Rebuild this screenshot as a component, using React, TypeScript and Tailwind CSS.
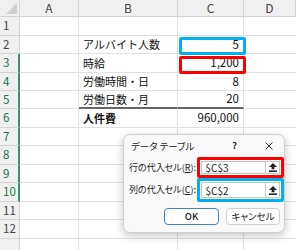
import React from 'react';

const cols = ['A', 'B', 'C', 'D'];
const rowHeights = [19, 18, 19, 18, 18, 19, 18, 19, 18, 19, 18, 19, 19];

const cells: Record<number, { b?: string; c?: string; bold?: boolean }> = {
  2: { b: 'アルバイト人数', c: '5' },
  3: { b: '時給', c: '1,200' },
  4: { b: '労働時間・日', c: '8' },
  5: { b: '労働日数・月', c: '20' },
  6: { b: '人件費', c: '960,000', bold: true },
};

function CollapseIcon() {
  return (
    <svg width="8" height="9" viewBox="0 0 8 9">
      <path d="M4 0 L8 4 L5.4 4 L5.4 6.3 L2.6 6.3 L2.6 4 L0 4 Z" fill="#222" />
      <rect x="0" y="7.4" width="8" height="1.6" fill="#222" />
    </svg>
  );
}

function RefField({ value, ring, height }: { value: string; ring: string; height: string }) {
  return (
    <div className={`flex ${height} w-[88px] rounded-[2px] border-[3px] ${ring} bg-white p-[1px]`}>
      <div className="flex flex-1 items-center border border-[#c4c4c4] bg-white pl-[4px] text-[10px] text-[#222]">
        {value}
      </div>
      <div className="flex w-[14px] items-center justify-center border border-l-0 border-[#c4c4c4] bg-white">
        <CollapseIcon />
      </div>
    </div>
  );
}

export default function App() {
  return (
    <div className="relative h-[250px] w-[296px] overflow-hidden bg-white font-['Noto_Sans_CJK_JP',sans-serif] text-[#111]">
      {/* column header */}
      <div className="flex h-[17px]">
        <div className="relative w-[20px] border-r border-b border-[#d4d4d4] bg-[#f0f0f0]">
          <div className="absolute right-[2px] bottom-[2px] h-0 w-0 border-l-[11px] border-t-[11px] border-l-transparent border-t-transparent border-r-0 border-b-[11px] border-b-[#cfcfcf]" />
        </div>
        {cols.map((c, i) => (
          <div
            key={c}
            className={`flex items-center justify-center border-r border-b border-[#d4d4d4] bg-[#f0f0f0] text-[12px] text-[#444] ${
              i === 0 ? 'w-[59px]' : i === 1 ? 'w-[99px]' : i === 2 ? 'w-[66px]' : 'flex-1'
            }`}
          >
            {c}
          </div>
        ))}
      </div>

      {/* rows */}
      {rowHeights.map((h, idx) => {
        const r = idx + 1;
        const sel = r >= 3 && r <= 10;
        const data = cells[r] || {};
        const thick = r === 5;
        return (
          <div key={r} className="flex" style={{ height: h }}>
            <div
              className={`flex w-[20px] items-center border-b border-[#d4d4d4] bg-[#f0f0f0] pl-[3px] text-[11.5px] ${
                sel ? 'border-r-2 border-r-[#3b9468] text-[#217346]' : 'border-r text-[#444]'
              }`}
            >
              {r <= 12 ? r : ''}
            </div>
            <div className="w-[59px] border-r border-b border-[#e1e1e1]" />
            <div
              className={`flex w-[99px] items-center border-r border-[#e1e1e1] pl-[4px] text-[11px] ${
                thick ? 'border-b-2 border-b-[#666666]' : 'border-b'
              } ${data.bold ? 'font-bold' : ''}`}
            >
              {data.b}
            </div>
            <div
              className={`flex w-[66px] items-center justify-end border-r border-[#e1e1e1] pr-[4px] text-[11.5px] ${
                thick ? 'border-b-2 border-b-[#666666]' : 'border-b'
              }`}
            >
              {data.c}
            </div>
            <div className="flex-1 border-b border-[#e1e1e1]" />
          </div>
        );
      })}

      {/* highlight boxes */}
      <div className="absolute left-[179px] top-[37px] h-[18px] w-[67px] rounded-[2px] border-[3px] border-[#00b0f0]" />
      <div className="absolute left-[179px] top-[56px] h-[18px] w-[67px] rounded-[2px] border-[3px] border-[#ff0000]" />

      {/* data table dialog */}
      <div className="absolute left-[123px] top-[134px] flex h-[99px] w-[162px] flex-col rounded-[7px] border border-[#d0d0d0] bg-[#f9f9f9] shadow-[0_3px_10px_rgba(0,0,0,0.22)] [font-feature-settings:'palt']">
        <div className="flex h-[22px] items-center pl-[7px] pr-[11px] text-[9.5px] text-[#222]">
          <span className="flex-1">データ テーブル</span>
          <span className="mr-[28px] text-[9px] font-semibold">?</span>
          <svg width="8" height="8" viewBox="0 0 8 8">
            <path d="M0.5 0.5 L7.5 7.5 M7.5 0.5 L0.5 7.5" stroke="#333" strokeWidth="1" />
          </svg>
        </div>
        <div className="flex items-center pl-[5px]">
          <span className="w-[68px] text-[9px] text-[#222]">
            行の代入セル(<span className="underline">R</span>):
          </span>
          <RefField value="$C$3" ring="border-[#ff0000]" height="h-[21px]" />
        </div>
        <div className="flex items-center pl-[5px]">
          <span className="w-[68px] text-[9px] text-[#222]">
            列の代入セル(<span className="underline">C</span>):
          </span>
          <RefField value="$C$2" ring="border-[#00b0f0]" height="h-[24px]" />
        </div>
        <div className="mt-[6px] flex gap-[7px] pl-[40px]">
          <div className="flex h-[17px] w-[55px] items-center justify-center rounded-[4px] border border-[#3d86c6] bg-white text-[9.5px] font-medium text-[#222]">
            OK
          </div>
          <div className="flex h-[17px] w-[54px] items-center justify-center rounded-[4px] border border-[#d0d0d0] bg-white text-[9.5px] text-[#222]">
            キャンセル
          </div>
        </div>
      </div>
    </div>
  );
}
